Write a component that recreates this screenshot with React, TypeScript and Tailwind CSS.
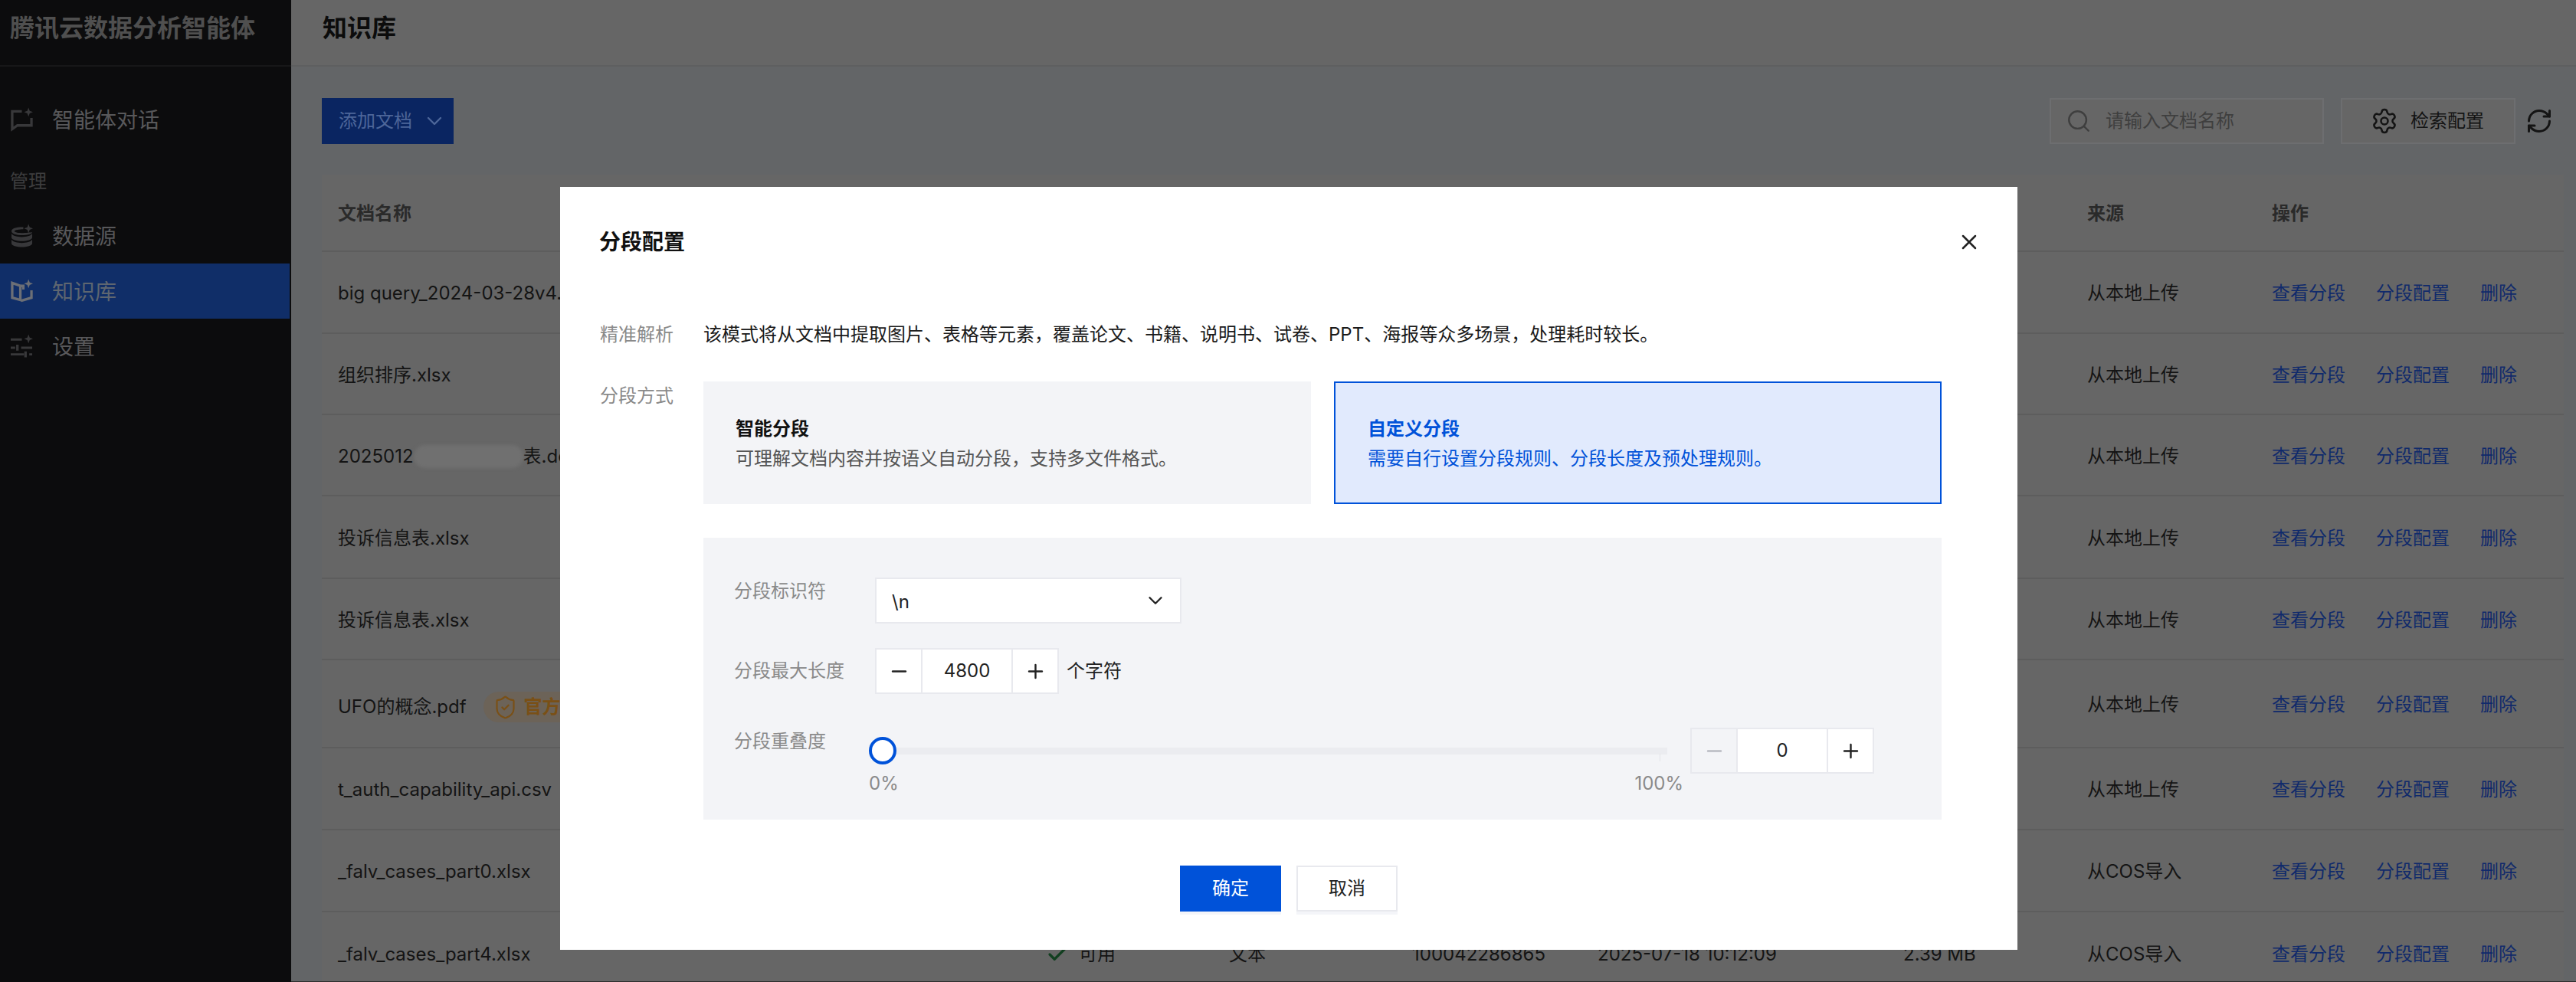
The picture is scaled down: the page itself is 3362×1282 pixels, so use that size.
import { Check, ChevronDown, Minus, Plus, RefreshCw, Search, Settings, ShieldCheck, X } from 'lucide-react';

const sparkle = 'M24 0 L25.6 4.4 L30 6 L25.6 7.6 L24 12 L22.4 7.6 L18 6 L22.4 4.4 Z';

function ChatIcon() {
  return (
    <svg width="30" height="32" viewBox="0 0 30 32" fill="none">
      <path d="M15 5 H2 V29 L9 24 H28 V14" stroke="currentColor" strokeWidth="3.4" />
      <path d={sparkle} fill="currentColor" />
    </svg>
  );
}

function DataIcon() {
  return (
    <svg width="30" height="32" viewBox="0 0 30 32" fill="none">
      <path d="M17 4.2 C8 4 1 6 1 9.5 C1 13 8 15 15 15 C22 15 29 13.5 29 11 C27 11 20 12 15 12 C8 12 5 10.5 5 9.5 C5 8 12 7 17 7 Z" fill="currentColor" />
      <path d="M1 13 V18 C1 21 8 23 15 23 C22 23 29 21 29 18 V13 C27 16 21 17.5 15 17.5 C9 17.5 3 16 1 13 Z" fill="currentColor" />
      <path d="M1 21 V26 C1 29 8 31 15 31 C22 31 29 29 29 26 V21 C27 24 21 25.5 15 25.5 C9 25.5 3 24 1 21 Z" fill="currentColor" />
      <path d={sparkle} fill="currentColor" />
    </svg>
  );
}

function BookIcon() {
  return (
    <svg width="30" height="32" viewBox="0 0 30 32" fill="none">
      <path d="M2 5 L13 9 V28 L2 25 Z" stroke="currentColor" strokeWidth="3.4" />
      <path d="M13 9 H17 V14 M28 15 V25 L14 29" stroke="currentColor" strokeWidth="3.4" />
      <path d={sparkle} fill="currentColor" />
    </svg>
  );
}

function TuneIcon() {
  return (
    <svg width="30" height="32" viewBox="0 0 30 32" fill="none">
      <path d="M0 7 H15 M0 18 H6 M14 18 H29 M0 27 H18 M25 27 H29" stroke="currentColor" strokeWidth="3" />
      <path d="M9 14 V22 M20 23 V31" stroke="currentColor" strokeWidth="3.4" />
      <path d={sparkle} fill="currentColor" />
    </svg>
  );
}

function NavItem({ icon, label, active }: { icon: React.ReactNode; label: string; active?: boolean }) {
  return (
    <div
      className={`flex h-[72px] w-[378px] items-center gap-[25px] pl-[14px] ${
        active ? 'bg-[#102e68] text-[#5e6670]' : 'text-[#58585a]'
      }`}
    >
      <span className={`flex w-[29px] justify-center ${active ? 'text-[#6c6f76]' : 'text-[#38383a]'}`}>{icon}</span>
      <span className="pt-[2px] text-[28px] leading-none">{label}</span>
    </div>
  );
}

function Stepper({ value, disabled }: { value: string; disabled?: boolean }) {
  return (
    <div className="flex h-[60px] w-[240px] border-2 border-[#e8e9ee] bg-white text-[#222]">
      <div
        className={`flex w-[60px] shrink-0 items-center justify-center border-r-2 border-[#e8e9ee] ${
          disabled ? 'bg-[#f3f4f7] text-[#b9bbc2]' : ''
        }`}
      >
        <Minus size={29} strokeWidth={2} />
      </div>
      <div className="flex flex-1 items-center justify-center text-[24px]">{value}</div>
      <div className="flex w-[60px] shrink-0 items-center justify-center border-l-2 border-[#e8e9ee]">
        <Plus size={29} strokeWidth={2} />
      </div>
    </div>
  );
}

const rows = [
  { name: 'big query_2024-03-28v4.xlsx', source: '从本地上传', h: 'h-[107px]' },
  { name: '组织排序.xlsx', source: '从本地上传', h: 'h-[106px]' },
  { name: 'blur', source: '从本地上传', h: 'h-[106px]' },
  { name: '投诉信息表.xlsx', source: '从本地上传', h: 'h-[108px]' },
  { name: '投诉信息表.xlsx', source: '从本地上传', h: 'h-[106px]' },
  { name: 'UFO的概念.pdf', source: '从本地上传', h: 'h-[115px]', official: true },
  { name: 't_auth_capability_api.csv', source: '从本地上传', h: 'h-[107px]' },
  { name: '_falv_cases_part0.xlsx', source: '从COS导入', h: 'h-[107px]' },
  {
    name: '_falv_cases_part4.xlsx',
    source: '从COS导入',
    h: 'h-[107px]',
    detail: { type: '文本', id: '100042286865', time: '2025-07-18 10:12:09', size: '2.39 MB' },
  },
];

const gridCols = 'grid grid-cols-[929px_234px_239px_242px_399px_240px_241px_402px] items-center';

function App() {
  return (
    <div className="relative flex h-[1282px] w-[3362px] overflow-hidden bg-[#636567] text-[24px] text-[#141414] [font-family:Inter,'Noto_Sans_CJK_SC',sans-serif]">
      <aside className="h-full w-[380px] shrink-0 bg-[#0c0c0d]">
        <div className="flex h-[87px] items-start border-b-2 border-[#171718] pl-[13px] pt-[17px] text-[32px] font-bold leading-[40px] text-[#4f4f4f]">
          腾讯云数据分析智能体
        </div>
        <nav className="pt-[33px]">
          <NavItem icon={<ChatIcon />} label="智能体对话" />
          <div className="flex h-[80px] items-center pl-[13px] pt-[10px] text-[#3d3d3e]">管理</div>
          <NavItem icon={<DataIcon />} label="数据源" />
          <NavItem icon={<BookIcon />} label="知识库" active />
          <NavItem icon={<TuneIcon />} label="设置" />
        </nav>
      </aside>

      <main className="flex h-full flex-1 flex-col border-b border-r border-[#2c2c2c]">
        <header className="flex h-[87px] shrink-0 items-start border-b-2 border-[#5e5f60] bg-[#666666] pl-[41px] pt-[17px] text-[32px] font-bold leading-[40px] text-[#0c0c0c]">
          知识库
        </header>

        <div className="flex items-center justify-between pl-[40px] pr-[31px] pt-[41px]">
          <div className="flex h-[60px] w-[172px] items-center gap-[13px] bg-[#0a2561] pl-[22px] text-[#4d6699]">
            添加文档
            <ChevronDown size={32} strokeWidth={1.8} />
          </div>
          <div className="flex items-center">
            <div className="flex h-[60px] w-[358px] items-center gap-[18px] border-2 border-[#6d6e70] bg-[#666666] pl-[19px] text-[#3f3f3f]">
              <Search size={34} strokeWidth={1.7} />
              请输入文档名称
            </div>
            <div className="ml-[22px] flex h-[60px] w-[228px] items-center gap-[16px] border-2 border-[#6d6e70] bg-[#666666] pl-[37px] text-[#141414]">
              <Settings size={36} strokeWidth={1.7} />
              检索配置
            </div>
            <RefreshCw className="ml-[13px]" size={36} strokeWidth={2} />
          </div>
        </div>

        <section className="ml-[40px] mr-[17px] mt-[40px] flex-1 overflow-hidden bg-[#666666]">
          <div className={`${gridCols} h-[101px] border-b-2 border-[#5d5d5d] pt-[2px] font-bold text-[#2a2a2a]`}>
            <div className="pl-[21px]">文档名称</div>
            <div className="col-span-5" />
            <div className="pl-[21px]">来源</div>
            <div className="pl-[21px]">操作</div>
          </div>
          {rows.map((row, i) => (
            <div key={i} className={`${gridCols} ${row.h} border-b-2 border-[#5d5d5d] pt-[3px] last:border-b-0`}>
              <div className={`flex items-center whitespace-nowrap pl-[21px] ${row.official ? 'mt-[6px]' : ''}`}>
                {row.name === 'blur' ? (
                  <>
                    <span>2025012</span>
                    <span className="h-[30px] w-[143px] rounded-full bg-[#707070] blur-[2px]" />
                    <span>表.docx</span>
                  </>
                ) : (
                  row.name
                )}
                {row.official && (
                  <span className="ml-[22px] flex h-[40px] items-center gap-[8px] rounded-full bg-[#6c6358] pl-[12px] pr-[16px] font-bold text-[#7a5016]">
                    <ShieldCheck size={33} strokeWidth={1.6} />
                    官方示例
                  </span>
                )}
              </div>
              {row.detail ? (
                <>
                  <div className="flex items-center gap-[13px] pl-[16px]">
                    <Check className="text-[#123f20]" size={30} strokeWidth={2.6} />
                    可用
                  </div>
                  <div className="pl-[21px]">{row.detail.type}</div>
                  <div className="pl-[21px]">{row.detail.id}</div>
                  <div className="pl-[21px]">{row.detail.time}</div>
                  <div className="pl-[21px]">{row.detail.size}</div>
                </>
              ) : (
                <div className="col-span-5" />
              )}
              <div className="pl-[21px]">{row.source}</div>
              <div className="flex gap-[40px] pl-[21px] text-[#102a6b]">
                <span>查看分段</span>
                <span>分段配置</span>
                <span>删除</span>
              </div>
            </div>
          ))}
        </section>
      </main>

      {/* dialog over the dimmed page */}
      <div className="absolute inset-0 flex justify-center pl-[2px] pt-[244px]">
        <div className="h-[996px] w-[1902px] bg-white pt-[52px]">
          <div className="flex h-[40px] items-center justify-between pl-[51px] pr-[47px] text-[28px] font-bold text-[#111]">
            分段配置
            <X size={32} strokeWidth={1.9} className="text-[#222]" />
          </div>

          <div className="pl-[52px] pr-[98px] pt-[81px]">
            <div className="flex h-[40px] items-center">
              <div className="w-[135px] text-[#8a8a8a]">精准解析</div>
              <div className="text-[#1a1a1a]">
                该模式将从文档中提取图片、表格等元素，覆盖论文、书籍、说明书、试卷、PPT、海报等众多场景，处理耗时较长。
              </div>
            </div>

            <div className="mt-[41px] flex">
              <div className="w-[135px] leading-[38px] text-[#8a8a8a]">分段方式</div>
              <div className="w-[1616px]">
                <div className="flex gap-[30px]">
                  <div className="flex h-[160px] w-[793px] flex-col justify-center gap-[4px] bg-[#f3f4f7] pl-[42px] pt-[4px]">
                    <div className="font-bold leading-[34px] text-[#111]">智能分段</div>
                    <div className="leading-[36px] text-[#555]">可理解文档内容并按语义自动分段，支持多文件格式。</div>
                  </div>
                  <div className="flex h-[160px] w-[793px] flex-col justify-center gap-[4px] border-2 border-[#0052d9] bg-[#e1eafd] pl-[42px] pt-[4px] text-[#0052d9]">
                    <div className="font-bold leading-[34px]">自定义分段</div>
                    <div className="leading-[36px]">需要自行设置分段规则、分段长度及预处理规则。</div>
                  </div>
                </div>

                <div className="mt-[44px] h-[368px] bg-[#f3f4f7] pl-[40px] pt-[52px]">
                  <div className="flex">
                    <div className="w-[184px] leading-[36px] text-[#8a8a8a]">分段标识符</div>
                    <div className="flex h-[60px] w-[400px] items-center justify-between border-2 border-[#e8e9ee] bg-white pl-[20px] pr-[17px] text-[#222]">
                      <span className="pt-[4px]">\n</span>
                      <ChevronDown size={30} strokeWidth={1.9} />
                    </div>
                  </div>

                  <div className="mt-[32px] flex items-center">
                    <div className="w-[184px] text-[#8a8a8a]">分段最大长度</div>
                    <Stepper value="4800" />
                    <div className="ml-[10px] text-[#222]">个字符</div>
                  </div>

                  <div className="mt-[44px] flex items-start">
                    <div className="w-[184px] leading-[36px] text-[#8a8a8a]">分段重叠度</div>
                    <div className="-ml-[8px] mt-[12px] w-[1063px]">
                      <div className="relative flex h-[36px] items-center pr-[21px]">
                        <div className="h-[36px] w-[36px] shrink-0 rounded-full border-4 border-[#0052d9] bg-white" />
                        <div className="h-[9px] flex-1 bg-[#ebecf0]" />
                        <div className="absolute right-[30px] top-[22px] h-[10px] w-px bg-[#e3e4e8]" />
                      </div>
                      <div className="mt-[9px] flex justify-between leading-[32px] text-[#8a8a8a]">
                        <span>0%</span>
                        <span>100%</span>
                      </div>
                    </div>
                    <div className="ml-[9px]">
                      <Stepper value="0" disabled />
                    </div>
                  </div>
                </div>
              </div>
            </div>
          </div>

          <div className="mt-[60px] flex justify-center gap-[20px]">
            <div className="flex h-[60px] w-[132px] items-center justify-center bg-[#0052d9] text-white shadow-[0_4px_0_#f4f5f9]">
              确定
            </div>
            <div className="flex h-[60px] w-[132px] items-center justify-center border-2 border-[#e8e9ee] bg-white text-[#222] shadow-[0_4px_0_#f4f5f9]">
              取消
            </div>
          </div>
        </div>
      </div>
    </div>
  );
}

export default App;
